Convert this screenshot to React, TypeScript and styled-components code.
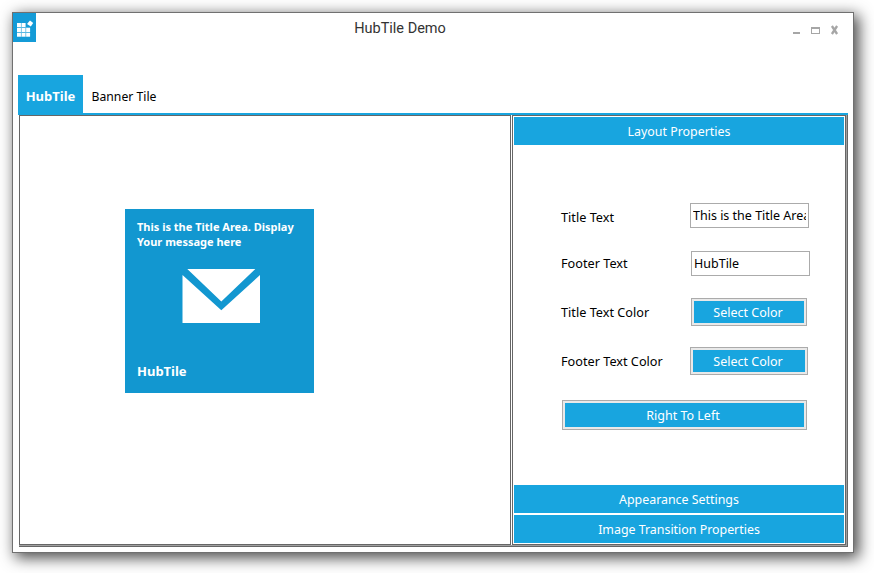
import React from "react";
import styled, { createGlobalStyle } from "styled-components";

const GlobalStyle = createGlobalStyle`
  * { box-sizing: border-box; }
  body { margin: 0; background: #fff; overflow: hidden; }
  button, input { font: inherit; letter-spacing: inherit; border-radius: 0; margin: 0; }
`;

const Desktop = styled.div`
  width: 874px;
  height: 573px;
  padding: 12px;
  background: #fff;
  font: 12.5px/18px "Noto Sans", "Open Sans", sans-serif;
  color: #000;
`;

const Window = styled.main`
  width: 842px;
  height: 541px;
  display: flex;
  flex-direction: column;
  border: 1px solid #707070;
  background: #fff;
  box-shadow: 4px 4px 14px 1px rgba(0, 0, 0, 0.7);
`;

const TitleBar = styled.header`
  display: grid;
  grid-template-columns: 23px 1fr 61px;
  height: 62px;
  align-items: start;
`;

const AppIcon = styled.svg`
  display: block;
  background: #149bd7;
`;

const WindowTitle = styled.h1`
  margin: 6px 28px 0 0;
  text-align: center;
  font: 400 14.5px/20px Roboto, sans-serif;
  color: #333;
`;

const WindowControls = styled.svg`
  display: block;
  margin-top: 12px;
`;

const TabStrip = styled.nav`
  display: flex;
  height: 40px;
  margin: 0 5px;
  border-bottom: 2px solid #18a5df;
`;

const Tab = styled.button<{ $active?: boolean }>`
  height: 38px;
  width: ${(p) => (p.$active ? "65px" : "82px")};
  padding: ${(p) => (p.$active ? "3px 0 0" : "5px 0 0")};
  border: 0;
  background: ${(p) => (p.$active ? "#18a5df" : "transparent")};
  color: ${(p) => (p.$active ? "#fff" : "#000")};
  font-weight: ${(p) => (p.$active ? 700 : 400)};
  font-size: ${(p) => (p.$active ? "13px" : "12.2px")};
`;

const Workspace = styled.section`
  display: grid;
  grid-template-columns: 492px 334px;
  column-gap: 1px;
  width: 829px;
  height: 432px;
  margin-left: 6px;
  border-right: 1px solid #666;
  border-bottom: 1px solid #666;
  background: linear-gradient(#a0a0a0, #a0a0a0) right / 1px 100% no-repeat,
    linear-gradient(#a0a0a0, #a0a0a0) bottom / 100% 1px no-repeat;
`;

const Panel = styled.div`
  height: 430px;
  border: 1px solid #666;
  background: #fff;
`;

const PreviewPanel = styled(Panel)`
  padding: 93px 0 0 105px;
`;

const SettingsPanel = styled(Panel)`
  display: flex;
  flex-direction: column;
  gap: 2px;
  padding: 1px;
`;

const Tile = styled.article`
  display: flex;
  flex-direction: column;
  width: 189px;
  height: 184px;
  padding: 10px 0 0 12px;
  background: #1297d0;
  color: #fff;
  font-weight: 700;
`;

const TileTitle = styled.div`
  height: 50px;
  font-size: 11px;
  line-height: 15px;
  white-space: pre-line;
`;

const TileFooter = styled.div`
  margin-top: 39px;
  font-size: 13px;
`;

const Envelope = styled.svg`
  display: block;
  margin-left: 45px;
`;

const SectionHeader = styled.button`
  height: 28px;
  flex: none;
  border: 0;
  padding: 1px 0 0;
  background: #18a5df;
  color: #fff;
  font-size: 12.4px;
`;

const Form = styled.form`
  flex: 1;
  display: grid;
  grid-template-columns: 129px 120px;
  grid-template-rows: 48px 47px 49px 53px 30px;
  align-items: start;
  padding: 56px 0 0 47px;
`;

const Label = styled.label<{ $drop?: number }>`
  padding-top: ${(p) => p.$drop ?? 5}px;
  font-size: 12.7px;
`;

const TextBox = styled.input<{ $indent?: number }>`
  width: 119px;
  height: 25px;
  margin-left: ${(p) => p.$indent ?? 0}px;
  padding: 0 2px;
  border: 1px solid #ababab;
  background: #fff;
  color: #000;
  outline: 0;
`;

const FramedButton = styled.button<{ $width: number; $indent?: number; $wide?: boolean }>`
  width: ${(p) => p.$width}px;
  height: ${(p) => (p.$wide ? 30 : 28)}px;
  margin-left: ${(p) => p.$indent ?? 0}px;
  grid-column: ${(p) => (p.$wide ? "1 / -1" : "auto")};
  padding: ${(p) => (p.$wide ? "2px 3px 0 0" : "2px 2px 0 0")};
  border: 1px solid #ababab;
  background: #18a5df;
  box-shadow: inset 0 0 0 2px #e9e9e9;
  color: #fff;
`;

export default function App() {
  return (
    <>
      <GlobalStyle />
      <Desktop>
        <Window>
          <TitleBar>
            <AppIcon width="23" height="29" viewBox="0 0 23 29">
              <path d="M4 10h9v4h4v10H4z" fill="#fff" opacity=".3" />
              <g fill="#fff">
                {[10, 15, 20].map((y) =>
                  [4, 8.7, 13.2].map((x, i) =>
                    y === 10 && i === 2 ? null : (
                      <rect key={`${x}-${y}`} x={x} y={y} width={i === 1 ? 3.7 : 3.9} height={y === 20 ? 3.6 : 4} />
                    )
                  )
                )}
              </g>
              <path d="M17 7.4 20.2 10 17.8 13.4 14 11Z" fill="#fff" />
            </AppIcon>
            <WindowTitle>HubTile Demo</WindowTitle>
            <WindowControls width="61" height="14" viewBox="0 0 61 14" shapeRendering="crispEdges">
              <path d="M1 7h7v2H1z" fill="#a6a6a6" />
              <path d="M19 2h9v7h-9zM20 4v4h7V4z" fill="#a6a6a6" fillRule="evenodd" />
              <path d="M39.9 1 45.1 9M45.1 1 39.9 9" fill="none" stroke="#a6a6a6" strokeWidth="2.3" shapeRendering="auto" />
            </WindowControls>
          </TitleBar>
          <TabStrip>
            <Tab $active>HubTile</Tab>
            <Tab>Banner Tile</Tab>
          </TabStrip>
          <Workspace>
            <PreviewPanel>
              <Tile>
                <TileTitle>{"This is the Title Area. Display\nYour message here"}</TileTitle>
                <Envelope width="79" height="54" viewBox="0 0 79 54">
                  <path d="M5.3 0H73.3L39.3 32.5ZM.5 6 39.3 41.3 78 6V54H.5Z" fill="#fff" />
                </Envelope>
                <TileFooter>HubTile</TileFooter>
              </Tile>
            </PreviewPanel>
            <SettingsPanel>
              <SectionHeader>Layout Properties</SectionHeader>
              <Form>
                <Label htmlFor="title">Title Text</Label>
                <TextBox id="title" defaultValue="This is the Title Area. Display Your message here" />
                <Label htmlFor="footer" $drop={3}>Footer Text</Label>
                <TextBox id="footer" $indent={1} defaultValue="HubTile" />
                <Label>Title Text Color</Label>
                <FramedButton type="button" $width={116} $indent={1}>Select Color</FramedButton>
                <Label>Footer Text Color</Label>
                <FramedButton type="button" $width={118}>Select Color</FramedButton>
                <FramedButton type="button" $width={245} $indent={1} $wide>Right To Left</FramedButton>
              </Form>
              <SectionHeader>Appearance Settings</SectionHeader>
              <SectionHeader>Image Transition Properties</SectionHeader>
            </SettingsPanel>
          </Workspace>
        </Window>
      </Desktop>
    </>
  );
}
